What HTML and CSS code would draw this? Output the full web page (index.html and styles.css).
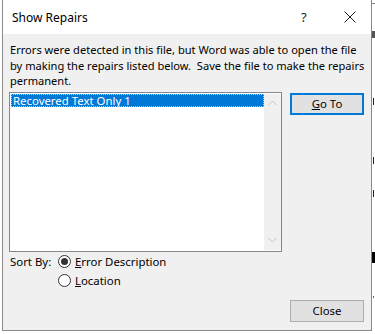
FILE: index.html
```html
<!DOCTYPE html>
<html lang="en">
<head>
    <meta charset="UTF-8">
    <title>Show Repairs</title>
    <link rel="stylesheet" href="styles.css">
</head>
<body>

<div class="screen">
    <!-- Dialog -->
    <div class="dialog">
        <div class="titlebar">
            <span class="title">Show Repairs</span>
            <span class="help">?</span>
            <span class="close-x">
                <svg width="12" height="12" viewBox="0 0 12 12"><path d="M0.5 0.5 L11.5 11.5 M11.5 0.5 L0.5 11.5" stroke="#222" stroke-width="1" fill="none"/></svg>
            </span>
        </div>

        <div class="dialog-body">
            <p class="message">Errors were detected in this file, but Word was able to open the file<br>by making the repairs listed below.&nbsp; Save the file to make the repairs<br>permanent.</p>

            <div class="main-row">
                <div class="listbox">
                    <div class="items">
                        <div class="item selected">Recovered Text Only 1</div>
                    </div>
                    <div class="scrollbar">
                        <svg width="9" height="6" viewBox="0 0 9 6"><path d="M0.5 5 L4.5 1 L8.5 5" stroke="#c3c3c3" stroke-width="1" fill="none"/></svg>
                        <svg width="9" height="6" viewBox="0 0 9 6"><path d="M0.5 1 L4.5 5 L8.5 1" stroke="#c3c3c3" stroke-width="1" fill="none"/></svg>
                    </div>
                </div>
                <div class="side">
                    <button class="btn btn-default"><u>G</u>o To</button>
                </div>
            </div>

            <div class="sort">
                <div class="sort-row">
                    <span class="sort-label">Sort By:</span>
                    <span class="radio checked"></span>
                    <span><u>E</u>rror Description</span>
                </div>
                <div class="sort-row">
                    <span class="sort-label"></span>
                    <span class="radio"></span>
                    <span><u>L</u>ocation</span>
                </div>
            </div>

            <div class="footer">
                <button class="btn">Close</button>
            </div>
        </div>
    </div>

    <!-- Word document peeking out behind the dialog -->
    <div class="doc">
        <span class="frag f1"></span>
        <span class="frag f2"></span>
        <span class="frag f3"></span>
        <span class="frag f4"></span>
        <span class="frag f5"></span>
        <span class="frag f6"></span>
        <span class="frag f7"></span>
    </div>
</div>

</body>
</html>
```

FILE: styles.css
```css
html, body {
    margin: 0;
    padding: 0;
    background: #ffffff;
    font-family: "Noto Sans", "Open Sans", Arial, sans-serif;
    font-size: 12px;
    color: #000;
}

.screen {
    display: flex;
    width: 375px;
    height: 334px;
}

/* Dialog */
.dialog {
    margin-left: 2px;
    width: 370px;
    height: 331px;
    box-sizing: border-box;
    border: 1px solid #8a8a8a;
    border-top: none;
    background: #f0f0f0;
    display: flex;
    flex-direction: column;
}

.titlebar {
    height: 34px;
    background: #ffffff;
    display: flex;
    align-items: center;
    padding-left: 9px;
}

.title {
    flex: 1;
    font-size: 12px;
    color: #000;
    padding-top: 1px;
}

.help {
    width: 14px;
    font-size: 13px;
    color: #222;
    margin-right: 29px;
}

.close-x {
    display: flex;
    width: 12px;
    margin-right: 15px;
}

.dialog-body {
    flex: 1;
    padding: 8px 7px 8px 6px;
    display: flex;
    flex-direction: column;
}

.message {
    margin: 0 0 0 1px;
    line-height: 15.5px;
    font-size: 11.1px;
    white-space: nowrap;
}

.main-row {
    display: flex;
    margin-top: 3px;
    gap: 8px;
}

.listbox {
    width: 273px;
    height: 160px;
    box-sizing: border-box;
    border: 1px solid #828790;
    background: #fff;
    display: flex;
    padding: 1px 0 1px 1px;
}

.items {
    flex: 1;
}

.item {
    height: 13px;
    line-height: 13px;
    padding-left: 2px;
    font-size: 11.4px;
}

.item.selected {
    background: #0078d7;
    color: #fff;
    outline: 1px dotted #9fd0ff;
    outline-offset: -1px;
}

.scrollbar {
    width: 17px;
    background: #f0f0f0;
    display: flex;
    flex-direction: column;
    justify-content: space-between;
    align-items: center;
    padding: 6px 0 7px;
    box-sizing: border-box;
}

.side {
    display: flex;
    flex-direction: column;
    padding-top: 1px;
}

.btn {
    width: 74px;
    height: 22px;
    box-sizing: border-box;
    border: 1px solid #adadad;
    background: #e1e1e1;
    font-family: "Noto Sans", "Open Sans", Arial, sans-serif;
    font-size: 11.4px;
    color: #000;
    padding: 0;
    line-height: 18px;
}

.btn-default {
    border: 2px solid #0078d7;
}

.btn u, .sort-row u {
    text-underline-offset: 1px;
}

/* Sort options */
.sort {
    margin-top: 0;
    display: flex;
    flex-direction: column;
}

.sort-row {
    display: flex;
    align-items: center;
    height: 19px;
    font-size: 11.4px;
}

.sort-label {
    width: 48px;
    padding-left: 1px;
}

.radio {
    width: 11px;
    height: 11px;
    border: 1px solid #333;
    border-radius: 50%;
    background: #fff;
    margin-right: 4px;
    display: flex;
    align-items: center;
    justify-content: center;
}

.radio.checked::after {
    content: "";
    width: 7px;
    height: 7px;
    border-radius: 50%;
    background: #333;
}

.footer {
    margin-top: auto;
    display: flex;
    justify-content: flex-end;
}

/* Background document */
.doc {
    flex: 1;
    position: relative;
    background: #fff;
}

.frag {
    position: absolute;
    background: #222;
}

.f1 { left: 0; top: 3px; width: 3px; height: 1px; background: #888; }
.f2 { left: 0; top: 31px; width: 3px; height: 7px; background: #555; }
.f3 { left: 1px; top: 98px; width: 1px; height: 7px; }
.f4 { left: 1px; top: 157px; width: 1px; height: 7px; }
.f5 { left: 1px; top: 190px; width: 1px; height: 7px; }
.f6 { left: 0; top: 252px; width: 3px; height: 11px; background: #000; }
.f7 { left: 1px; top: 296px; width: 1px; height: 2px; background: #666; }
```
